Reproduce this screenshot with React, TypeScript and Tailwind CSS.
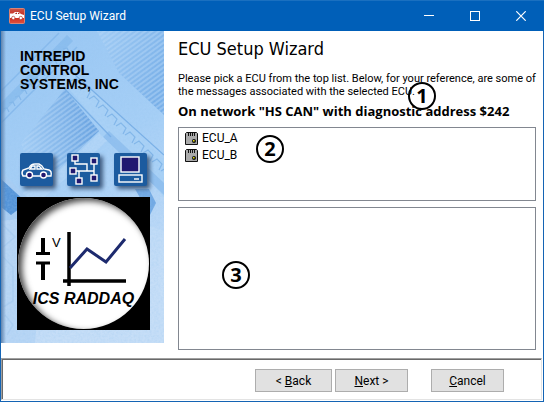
import type { ReactNode } from "react";

function AppIcon() {
  return (
    <svg className="size-4 shrink-0" viewBox="0 0 16 16" aria-hidden="true">
      <defs>
        <linearGradient id="red" x1="0" y1="0" x2="0" y2="1">
          <stop offset="0" stopColor="#c9564a" />
          <stop offset="0.5" stopColor="#c8281c" />
          <stop offset="1" stopColor="#e0503c" />
        </linearGradient>
      </defs>
      <rect x="0.5" y="0.5" width="15" height="15" rx="1" fill="url(#red)" stroke="#d98476" />
      <path d="M1 5.500H4L6 4H9.500L12 6L15 7V10H1Z" fill="#fff" />
      <path d="M6 6L7 4.800H8V6ZM9 4.800H9.500L11 6H9Z" fill="#b02a20" />
      <circle cx="4.3" cy="10" r="1.7" fill="#fff" stroke="#a82018" strokeWidth="0.6" />
      <circle cx="11.8" cy="10" r="1.7" fill="#fff" stroke="#a82018" strokeWidth="0.6" />
    </svg>
  );
}

function TitleBar() {
  return (
    <header className="flex h-[31px] shrink-0 items-center border-t border-[#1a70c0] bg-[#005fb8] pl-[9px] text-white">
      <AppIcon />
      <h1 className="ml-[5px] flex-1 text-[12px]">ECU Setup Wizard</h1>
      <div className="flex h-full">
        <button aria-label="Minimize" className="flex w-[46px] items-center justify-center">
          <svg className="size-[10px]" viewBox="0 0 10 10" stroke="#fff">
            <path d="M0 4.5H10" />
          </svg>
        </button>
        <button aria-label="Maximize" className="flex w-[45px] items-center justify-center">
          <svg className="size-[10px]" viewBox="0 0 10 10" fill="none" stroke="#fff">
            <rect x="0.5" y="0.5" width="9" height="9" />
          </svg>
        </button>
        <button aria-label="Close" className="flex w-[47px] items-center justify-center">
          <svg className="size-[10px]" viewBox="0 0 10 10" stroke="#fff" strokeWidth="1.2">
            <path d="M0.3 0.3L9.7 9.7M9.7 0.3L0.3 9.7" />
          </svg>
        </button>
      </div>
    </header>
  );
}

function CircuitTexture() {
  const pads = Array.from({ length: 11 }, (_, i) => i);
  return (
    <svg
      className="absolute inset-0 size-full"
      viewBox="0 0 163 312"
      preserveAspectRatio="none"
      aria-hidden="true"
    >
      <defs>
        <linearGradient id="fade" x1="0" y1="0" x2="0.3" y2="1">
          <stop offset="0" stopColor="#98c6f3" />
          <stop offset="0.5" stopColor="#a6cff6" />
          <stop offset="1" stopColor="#c4dcf7" />
        </linearGradient>
        <linearGradient id="chip" x1="0" y1="0.6" x2="1" y2="0.4">
          <stop offset="0" stopColor="#a3cdf5" />
          <stop offset="1" stopColor="#649fdf" />
        </linearGradient>
        <linearGradient id="comb" x1="0" y1="0" x2="1" y2="0.6">
          <stop offset="0" stopColor="#a3cdf5" />
          <stop offset="1" stopColor="#78afe8" />
        </linearGradient>
        <linearGradient id="edge" x1="0" y1="0" x2="1" y2="0">
          <stop offset="0" stopColor="#6083ac" />
          <stop offset="1" stopColor="#6083ac" stopOpacity="0" />
        </linearGradient>
        <pattern id="pins" width="4" height="4" patternUnits="userSpaceOnUse" patternTransform="rotate(-36)">
          <path d="M0 1H4" stroke="#b9dafa" strokeWidth="1.5" opacity="0.6" />
        </pattern>
        <filter id="grain" x="0" y="0" width="1" height="1">
          <feTurbulence type="fractalNoise" baseFrequency="0.45" numOctaves="2" seed="4" />
          <feColorMatrix values="0 0 0 0 0.3  0 0 0 0 0.55  0 0 0 0 0.85  0.9 0 0 0 -0.3" />
        </filter>
      </defs>
      <rect width="163" height="312" fill="url(#fade)" />
      <path d="M96 0H163V84L118 42Z" fill="url(#comb)" />
      <path d="M96 0H163V84L118 42Z" fill="url(#pins)" />
      <path d="M0 72L66 4L72 10L0 84Z" fill="#7fb5ea" opacity="0.6" />
      <path d="M0 60L58 2M0 92L76 16" stroke="#86b9ec" strokeWidth="1.5" fill="none" />
      <path d="M20 112L64 58L98 100L58 138L30 142Z" fill="url(#chip)" />
      <path d="M20 112L64 58L98 100L58 138L30 142Z" fill="url(#pins)" />
      <path d="M58 46L74 42L163 128V166L104 100Z" fill="#a9d1f6" />
      <path d="M72 42L163 124M62 56L110 106" fill="none" stroke="#79afe6" strokeWidth="1.3" />
      <g fill="none" stroke="#82b6e9" strokeWidth="1.2">
        {pads.map((n) => (
          <path key={n} d={`M${70 + n * 9} ${50 + n * 9}l5 -3l5 5l-3 6`} />
        ))}
        {pads.map((n) => (
          <path key={n} d={`M${2 + n * 6} ${78 - n * 6}l4 -1l2 4`} />
        ))}
      </g>
      <path d="M102 106L108 100L163 152V164Z" fill="#79b0e8" opacity="0.5" />
      <path d="M98 102L106 110L26 182L0 190V176L60 138Z" fill="#b2d5f7" />
      <path d="M0 140L26 166L44 178L34 312H0Z" fill="#a8cdf3" />
      <path d="M0 148L26 172L10 184L0 176Z" fill="#5494d8" />
      <path d="M0 192L14 206L2 216M2 226L12 236V270L2 276M4 284L12 294L6 304" fill="none" stroke="#91bdeb" strokeWidth="1.5" />
      <path d="M134 158H148L155 172L149 184Z" fill="#71a9e4" />
      <path d="M100 178L163 200V312H0V190Z" fill="#c8dff8" opacity="0.5" />
      <rect width="163" height="312" filter="url(#grain)" opacity="0.5" />
      <rect width="5" height="312" fill="url(#edge)" />
    </svg>
  );
}

function Tile({ children }: { children: ReactNode }) {
  return (
    <div className="size-[33px] rounded-xs bg-[#1c5b9f] shadow-[3px_3px_4px_#405c80]">
      <svg className="size-full" viewBox="0 0 33 33" fill="none" stroke="#fff" strokeWidth="1.4" aria-hidden="true">
        {children}
      </svg>
    </div>
  );
}

function Nodes() {
  const nodes = [
    [8, 5],
    [27, 8],
    [6, 18],
    [12, 28],
    [27, 25],
  ];
  return (
    <>
      <path d="M8 5V11H20V18M6 18H27M27 8V25M12 28V18" />
      {nodes.map(([x, y]) => (
        <rect key={`${x}-${y}`} x={x - 3} y={y - 3} width="6" height="6" fill="#201870" />
      ))}
    </>
  );
}

function Logo() {
  return (
    <div className="ml-4 mt-[11px] size-[133px] bg-black p-px">
      <div className="relative flex size-full flex-col rounded-full bg-white shadow-[inset_4px_3px_6px_#444]">
        <svg className="ml-4 mt-[33px] h-[56px] w-[94px]" viewBox="0 0 94 56" fill="none" stroke="#000" aria-hidden="true">
          <path d="M9 7V22M9 31V49" strokeWidth="4" />
          <path d="M2 22.500H16M2 32H16" strokeWidth="3" />
          <path d="M35 1V55M29 50H92" strokeWidth="3.5" />
          <path d="M36 37L53 18L72 31L91 8" stroke="#1d2a6e" strokeWidth="3" />
        </svg>
        <span className="absolute left-[34px] top-[37px] text-[13px] leading-4">V</span>
        <strong className="text-center text-[16px] italic leading-6">ICS RADDAQ</strong>
      </div>
    </div>
  );
}

function Sidebar() {
  return (
    <aside className="relative h-[312px] w-[163px] shrink-0 overflow-hidden font-['Liberation_Sans',Arial,sans-serif] text-black">
      <CircuitTexture />
      <div className="relative">
        <p className="pl-[19px] pt-[18px] text-[14px] font-bold leading-[14px]">
          INTREPID
          <br />
          CONTROL
          <br />
          SYSTEMS, INC
        </p>
        <div className="mt-[62px] flex gap-[14px] pl-[19px]">
          <Tile>
            <path d="M6 23H3Q1 20 3 17L9 15Q11 11 15 11H19Q22 12 24 16L29 17Q32 18 31 23H27M13 23H20" />
            <path d="M10 16L12 13H15V16ZM17 13H19L22 16H17Z" />
            <circle cx="9.500" cy="22" r="3" fill="#201870" />
            <circle cx="23.500" cy="22" r="3" fill="#201870" />
          </Tile>
          <Tile>
            <Nodes />
          </Tile>
          <Tile>
            <rect x="7" y="4" width="18" height="15" fill="#201870" />
            <rect x="5" y="22" width="23" height="7" />
            <path d="M20 26H25" />
          </Tile>
        </div>
        <Logo />
      </div>
    </aside>
  );
}

function EcuIcon() {
  return (
    <svg className="size-[13px]" viewBox="0 0 13 13" aria-hidden="true">
      <path d="M1.500 0.500H11.500L12.500 1.500V12.500H0.500V1.500Z" fill="#aaa" stroke="#111" />
      <path d="M3.500 1V4M5.500 1V4M7.500 1V4M9.500 1V4" stroke="#111" />
      <circle cx="9" cy="9" r="2" fill="#111" />
      <path d="M8 8H9.500V9.500H8Z" fill="#e8e000" />
    </svg>
  );
}

function Callout({ n, className }: { n: number; className: string }) {
  return (
    <span
      className={`absolute flex size-7 items-center justify-center rounded-full border-2 border-black font-['Open_Sans',sans-serif] text-[20px] font-bold leading-none ${className}`}
    >
      {n}
    </span>
  );
}

function WizardButton({ className, children }: { className: string; children: ReactNode }) {
  return (
    <button className={`h-[23px] border border-[#adadad] bg-[#e1e1e1] text-[12px] leading-4 ${className}`}>
      {children}
    </button>
  );
}

export default function App() {
  return (
    <div className="flex min-h-screen flex-col bg-white font-['Roboto','Liberation_Sans',sans-serif] text-black">
      <TitleBar />
      <div className="flex flex-1 flex-col border border-t-0 border-[#1464b4]">
        <div className="flex flex-1">
          <Sidebar />
          <main className="flex flex-1 flex-col pb-2 pl-[14px] pr-2">
            <div className="relative">
              <h2 className="pt-[6px] font-['DejaVu_Sans_Condensed','DejaVu_Sans',sans-serif] text-[18px] leading-6">
                ECU Setup Wizard
              </h2>
              <p className="mt-[11px] whitespace-nowrap text-[11px] leading-[13px]">
                Please pick a ECU from the top list. Below, for your reference, are some of
                <br />
                the messages associated with the selected ECU.
              </p>
              <p className="mt-[5px] whitespace-nowrap font-['Open_Sans','DejaVu_Sans',sans-serif] text-[13px] font-bold leading-4">
                On network "HS CAN" with diagnostic address $242
              </p>
              <Callout n={1} className="left-[230px] top-[51px]" />
            </div>
            <ul className="relative mt-2 h-[74px] border border-[#828790] pl-[6px] pt-[2px] text-[12px] leading-[17px]">
              <li className="flex items-center gap-1">
                <EcuIcon />
                ECU_A
              </li>
              <li className="flex items-center gap-1">
                <EcuIcon />
                ECU_B
              </li>
              <Callout n={2} className="left-[77px] top-[7px]" />
            </ul>
            <div className="relative mt-[6px] flex-1 border border-[#828790]">
              <Callout n={3} className="left-[43px] top-[53px]" />
            </div>
          </main>
        </div>
        <footer className="mb-px mr-px border-b border-l border-r border-t border-b-[#e3e3e3] border-l-[#a0a0a0] border-r-[#e3e3e3] border-t-[#a0a0a0]">
          <div className="flex h-10 justify-end border-l border-t border-[#696969] pr-[37px] pt-[9px]">
            <WizardButton className="w-[77px]">
              &lt; <u>B</u>ack
            </WizardButton>
            <WizardButton className="ml-[3px] w-[73px]">
              <u>N</u>ext &gt;
            </WizardButton>
            <WizardButton className="ml-[23px] w-[73px]">
              <u>C</u>ancel
            </WizardButton>
          </div>
        </footer>
      </div>
    </div>
  );
}
